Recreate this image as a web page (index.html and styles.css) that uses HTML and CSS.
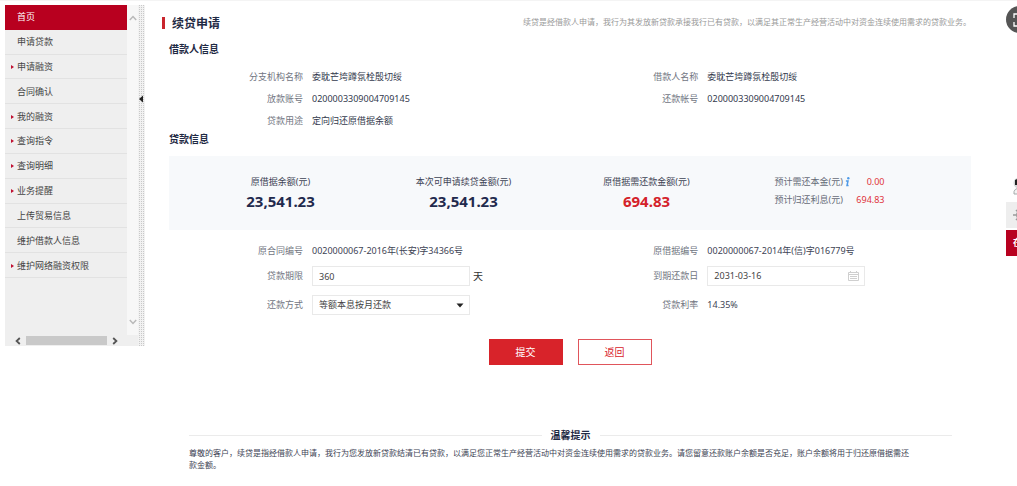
FILE: index.html
```html
<!DOCTYPE html>
<html lang="zh-CN">
<head>
<meta charset="utf-8">
<title>续贷申请</title>
<link rel="stylesheet" href="styles.css">
</head>
<body>
<div class="layout">
  <aside class="sidebar">
    <div class="pane">
      <div class="pane-body">
        <nav>
          <ul class="menu">
            <li class="item active"><a href="#">首页</a></li>
            <li class="item"><a href="#">申请贷款</a></li>
            <li class="item sub"><a href="#">申请融资</a></li>
            <li class="item"><a href="#">合同确认</a></li>
            <li class="item sub"><a href="#">我的融资</a></li>
            <li class="item sub"><a href="#">查询指令</a></li>
            <li class="item sub"><a href="#">查询明细</a></li>
            <li class="item sub"><a href="#">业务提醒</a></li>
            <li class="item"><a href="#">上传贸易信息</a></li>
            <li class="item"><a href="#">维护借款人信息</a></li>
            <li class="item sub"><a href="#">维护网络融资权限</a></li>
          </ul>
        </nav>
        <div class="vscroll">
          <svg width="8" height="6" viewBox="0 0 8 6"><path d="M0.8 5 4 1.5 7.2 5" fill="none" stroke="#b9b9b9" stroke-width="1.5"/></svg>
          <svg width="8" height="6" viewBox="0 0 8 6"><path d="M0.8 1 4 4.5 7.2 1" fill="none" stroke="#b9b9b9" stroke-width="1.5"/></svg>
        </div>
      </div>
      <div class="hscroll">
        <svg width="6" height="8" viewBox="0 0 6 8"><path d="M4.8 1 1.6 4 4.8 7" fill="none" stroke="#555" stroke-width="1.8"/></svg>
        <span class="thumb"></span>
        <svg width="6" height="8" viewBox="0 0 6 8"><path d="M1.2 1 4.4 4 1.2 7" fill="none" stroke="#555" stroke-width="1.8"/></svg>
      </div>
    </div>
    <button class="splitter" type="button" aria-label="收起菜单">
      <svg width="4" height="8" viewBox="0 0 4 8"><path d="M4 0.5v7L0 4z" fill="#222"/></svg>
    </button>
  </aside>

  <main class="main">
    <header class="page-head">
      <h1 class="title">续贷申请</h1>
      <p class="note">续贷是经借款人申请，我行为其发放新贷款承接我行已有贷款，以满足其正常生产经营活动中对资金连续使用需求的贷款业务。</p>
    </header>

    <div class="content">
      <h2 class="section">借款人信息</h2>
      <dl class="fields">
        <dt>分支机构名称</dt><dd>委耽芒垮蹲氛栓殷切绥</dd>
        <dt>借款人名称</dt><dd>委耽芒垮蹲氛栓殷切绥</dd>
        <dt>放款账号</dt><dd>0200003309004709145</dd>
        <dt>还款帐号</dt><dd>0200003309004709145</dd>
        <dt>贷款用途</dt><dd>定向归还原借据余额</dd>
      </dl>

      <h2 class="section">贷款信息</h2>
      <div class="summary">
        <div class="stat"><span>原借据余额(元)</span><strong>23,541.23</strong></div>
        <div class="stat"><span>本次可申请续贷金额(元)</span><strong>23,541.23</strong></div>
        <div class="stat due"><span>原借据需还款金额(元)</span><strong>694.83</strong></div>
        <div class="estimates">
          <div class="estimate">
            <span>预计需还本金(元)</span>
            <svg width="5" height="10" viewBox="0 0 5 10"><circle cx="3.3" cy="1.3" r="1.2" fill="#4f9be8"/><path d="M0.9 4H3L2 8.6H3.6" fill="none" stroke="#4f9be8" stroke-width="1.5"/></svg>
            <b>0.00</b>
          </div>
          <div class="estimate"><span>预计归还利息(元)</span><b>694.83</b></div>
        </div>
      </div>

      <form id="renew" class="form">
        <span class="label">原合同编号</span><span>0020000067-2016年(长安)字34366号</span>
        <span class="label">原借据编号</span><span>0020000067-2014年(信)字016779号</span>
        <label class="label" for="term">贷款期限</label>
        <div class="with-unit"><input class="control" id="term" type="text" value="360"><span class="unit">天</span></div>
        <label class="label" for="due">到期还款日</label>
        <div class="date control">
          <input id="due" type="text" value="2031-03-16">
          <svg width="11" height="10" viewBox="0 0 11 10"><path d="M0.5 1.5h10v8h-10zM0.5 3.5h10M2.5 0v2M8.5 0v2M2 5.5h7M2 7.5h7" fill="none" stroke="#cfcfcf"/></svg>
        </div>
        <label class="label" for="method">还款方式</label>
        <div class="select">
          <select class="control" id="method"><option>等额本息按月还款</option></select>
          <svg width="8" height="5" viewBox="0 0 8 5"><path d="M0.5 0.5h7L4 4.5z" fill="#222"/></svg>
        </div>
        <span class="label">贷款利率</span><span>14.35%</span>
      </form>

      <div class="actions">
        <button class="btn primary" type="submit" form="renew">提交</button>
        <button class="btn" type="button">返回</button>
      </div>

      <section class="tips">
        <h2 class="tips-title">温馨提示</h2>
        <p>尊敬的客户，续贷是指经借款人申请，我行为您发放新贷款结清已有贷款，以满足您正常生产经营活动中对资金连续使用需求的贷款业务。请您留意还款账户余额是否充足，账户余额将用于归还原借据需还<br>款金额。</p>
      </section>
    </div>
  </main>
</div>

<button class="capture" type="button" aria-label="截图">
  <svg width="14" height="14" viewBox="0 0 14 14"><path d="M1 5V1h4M9 1h4v4M13 9v4H9M5 13H1V9M4 7h6" fill="none" stroke="#fff" stroke-width="1.3"/></svg>
</button>
<div class="service">
  <button class="tool" type="button" aria-label="客服">
    <svg width="20" height="20" viewBox="0 0 20 20"><circle cx="6" cy="6" r="5.5" fill="#d5dada"/><path d="M2 8V3q4-3 9 0v5z" fill="#222"/><path d="M1 17q-1-6 7-6 7 0 7 6z" fill="#f4f4f4" stroke="#a5abab"/></svg>
  </button>
  <button class="tool gray" type="button" aria-label="设置">
    <svg width="20" height="20" viewBox="0 0 20 20"><circle cx="8" cy="10" r="4" fill="none" stroke="#999" stroke-width="2"/><path d="M8 3v3M8 14v3M0 10h3M13 10h3M3 5l2 2M3 15l2-2" stroke="#999" stroke-width="1.5"/></svg>
  </button>
  <button class="tool red" type="button">在</button>
</div>
</body>
</html>
```

FILE: styles.css
```css
* { box-sizing: border-box; }

body {
  margin: 0;
  overflow-x: hidden;
  background: #fff;
  border-top: 1px solid #f4f4f4;
  color: #3d4354;
  font: 9px/12px "Noto Sans", "Noto Sans CJK SC", sans-serif;
}

h1, h2, p, ul, dl, dd { margin: 0; padding: 0; }
ul { list-style: none; }
a { color: inherit; text-decoration: none; }
svg { display: block; flex: none; }
button, input, select { font: inherit; color: inherit; }

.layout { display: flex; align-items: flex-start; padding: 4px 0 0 5px; }

/* Sidebar */
.sidebar { display: flex; flex: none; width: 140px; background: #efefef; }
.pane { flex: 1; }
.pane-body { display: flex; height: 330px; }
.pane-body nav { flex: 1; }
.menu { display: grid; grid-auto-rows: 1fr; height: 273px; }
.item { display: flex; align-items: center; padding: 1px 0 0 12px; border-bottom: 1px solid #e2e2e2; color: #444; }
.item.active { background: #b8001f; border-color: #b8001f; color: #fff; }
.item.sub { padding-left: 6px; }
.item.sub::before {
  content: "";
  margin-right: 3px;
  border: 2px solid transparent;
  border-left: 3px solid #c01030;
  border-right: 0;
}
.vscroll {
  display: flex;
  flex-direction: column;
  align-items: center;
  justify-content: space-between;
  width: 11px;
  padding: 10px 0;
  background: #f7f7f7;
}
.hscroll { display: flex; align-items: center; gap: 5px; height: 11px; padding: 0 20px 0 10px; }
.thumb { flex: 1; height: 9px; background: #c9c9c9; }
.splitter {
  display: flex;
  align-items: flex-start;
  width: 7px;
  padding: 90px 0 0 1px;
  border: 0;
  background: conic-gradient(#c9c9c9 25%, #f2f2f2 0) 0 0 / 2px 2px;
}

/* Main column */
.main { flex: 1; min-width: 0; padding: 7px 46px 0 17px; }
.page-head { display: flex; align-items: center; justify-content: space-between; }
.title {
  display: flex;
  align-items: center;
  gap: 7px;
  color: #1f2a44;
  font-size: 12px;
  line-height: 24px;
}
.title::before { content: ""; width: 3px; height: 12px; margin-bottom: 3px; background: #c9252d; }
.note { padding-bottom: 4px; color: #999; font-size: 8px; white-space: nowrap; }
.content { padding-left: 7px; }
.section { color: #1f2a44; font-size: 10px; line-height: 14px; padding-top: 6px; }

.fields, .form {
  display: grid;
  grid-template-columns: 134px 12fr 134px 13fr;
  column-gap: 9px;
  align-items: center;
}
.fields { grid-auto-rows: 22px; padding-top: 10px; }
.fields dt, .label { color: #71757f; text-align: right; }
.fields dd { color: #333a4d; }
.fields + .section { padding-top: 0; }

.summary {
  display: grid;
  grid-template-columns: repeat(4, 1fr);
  margin-top: 10px;
  padding: 20px 50px 19px 20px;
  background: #f7f9fb;
}
.stat { display: flex; flex-direction: column; align-items: center; gap: 3px; white-space: nowrap; }
.stat strong { color: #1f2a4d; font-size: 15px; line-height: 20px; }
.stat.due strong { color: #d4222a; }
.estimates { display: flex; flex-direction: column; gap: 6px; justify-self: center; width: 110px; }
.estimate { display: flex; align-items: center; gap: 2px; color: #666b78; white-space: nowrap; }
.estimate b { margin-left: auto; color: #e0323a; font-weight: 400; }

.form { grid-template-rows: 22px 28px 30px; padding-top: 10px; }
.control {
  width: 158px;
  height: 20px;
  padding: 0 6px;
  border: 1px solid #e9e9e9;
  border-radius: 0;
  background: #fff;
  color: #444;
}
.with-unit { display: flex; align-items: center; gap: 3px; }
.unit { font-size: 10px; color: #333; }
.date { display: flex; align-items: center; justify-content: space-between; padding-right: 5px; }
.date input { flex: 1; min-width: 0; padding: 0; border: 0; background: none; }
.select { display: grid; width: 158px; align-items: center; }
.select > * { grid-area: 1 / 1; }
.select select { appearance: none; }
.select svg { justify-self: end; margin-right: 6px; pointer-events: none; }

.actions { display: flex; justify-content: center; gap: 15px; padding-top: 19px; }
.btn {
  width: 74px;
  height: 26px;
  padding: 0;
  border: 1px solid #e0555b;
  background: #fff;
  color: #d8232a;
  font-size: 10px;
}
.btn.primary { border-color: #d8232a; background: #d8232a; color: #fff; }

.tips { padding: 63px 19px 0 20px; }
.tips-title {
  display: flex;
  align-items: center;
  gap: 9px;
  margin-bottom: 5px;
  color: #1f2a44;
  font-size: 10px;
  line-height: 14px;
}
.tips-title::before, .tips-title::after { content: ""; flex: 1; height: 1px; background: #ebebeb; }
.tips p { font-size: 8px; }

/* Floating tools that extend past the window edge */
.capture {
  position: fixed;
  top: 6px;
  right: -16px;
  display: grid;
  place-items: center;
  width: 27px;
  height: 27px;
  padding: 0;
  border: 0;
  border-radius: 50%;
  background: #555;
}
.service { position: fixed; top: 174px; right: -17px; display: grid; gap: 2px; width: 28px; }
.tool { height: 26px; padding: 0 0 0 7px; border: 0; background: #fff; text-align: left; white-space: nowrap; }
.tool.gray { background: #eee; }
.tool.red { background: #b8001f; color: #fff; font-weight: 700; }
```
